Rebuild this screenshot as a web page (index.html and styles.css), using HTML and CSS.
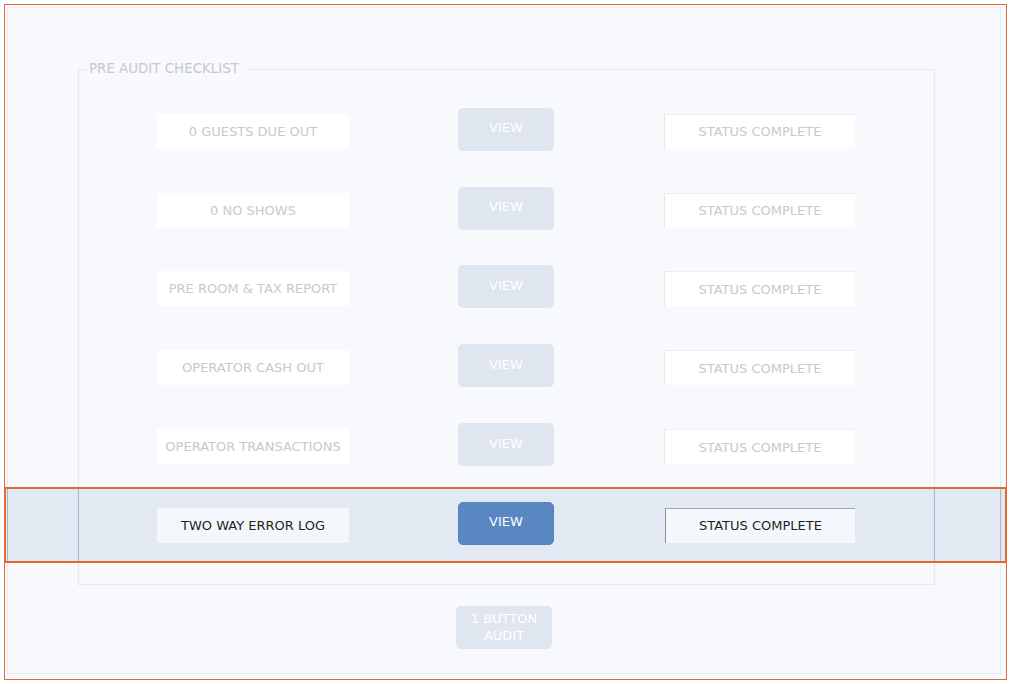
FILE: index.html
```html
<!DOCTYPE html>
<html>
<head>
<meta charset="utf-8">
<link rel="stylesheet" href="styles.css">
</head>
<body>
<div class="frame">
  <div class="panel">
    <fieldset class="checklist">
      <legend>PRE AUDIT CHECKLIST</legend>
      <div class="row">
        <div class="label">0 GUESTS DUE OUT</div>
        <button class="view">VIEW</button>
        <div class="status">STATUS COMPLETE</div>
      </div>
      <div class="row">
        <div class="label">0 NO SHOWS</div>
        <button class="view">VIEW</button>
        <div class="status">STATUS COMPLETE</div>
      </div>
      <div class="row">
        <div class="label">PRE ROOM &amp; TAX REPORT</div>
        <button class="view">VIEW</button>
        <div class="status">STATUS COMPLETE</div>
      </div>
      <div class="row">
        <div class="label">OPERATOR CASH OUT</div>
        <button class="view">VIEW</button>
        <div class="status">STATUS COMPLETE</div>
      </div>
      <div class="row">
        <div class="label">OPERATOR TRANSACTIONS</div>
        <button class="view">VIEW</button>
        <div class="status">STATUS COMPLETE</div>
      </div>
      <div class="row active">
        <div class="label">TWO WAY ERROR LOG</div>
        <button class="view">VIEW</button>
        <div class="status">STATUS COMPLETE</div>
      </div>
    </fieldset>
    <div class="footer">
      <button class="audit">1 BUTTON<br>AUDIT</button>
    </div>
  </div>
</div>
</body>
</html>
```

FILE: styles.css
```css
*, *::before, *::after { box-sizing: border-box; }

html, body {
  margin: 0;
  padding: 0;
  background: #ffffff;
  font-family: "DejaVu Sans", "Liberation Sans", sans-serif;
  font-size: 13px;
}

.frame {
  margin: 4px 0 0 4px;
  width: 1003px;
  height: 676px;
  border: 1px solid #e2692f;
  padding: 2px 5px 5px 2px;
  display: flex;
  flex-direction: column;
  background: #f8f9fc;
}

.panel {
  flex: 1;
  border: 1px solid #e7eaf0;
  background: #f8f9fc;
}

.checklist {
  margin: 53px 0 0 70px;
  width: 857px;
  border: 1px solid #e6e8ed;
  padding: 15px 0 19px 0;
  min-width: 0;
}

.checklist legend {
  margin-left: 7px;
  padding: 0 8px 0 3px;
  line-height: 16px;
  color: #c6c8cc;
  font-size: 13.4px;
}

.row {
  position: relative;
  height: 78.8px;
  display: grid;
  grid-template-columns: 192px 96px 192px;
  column-gap: 109px;
  align-items: center;
  padding-left: 78px;
}

.label {
  position: relative;
  z-index: 1;
  height: 35px;
  display: flex;
  align-items: center;
  justify-content: center;
  background: #ffffff;
  color: #c8c9cc;
  white-space: nowrap;
}

.view {
  position: relative;
  z-index: 1;
  height: 43px;
  margin-bottom: 4px;
  border: none;
  border-radius: 5px;
  background: #dfe6f0;
  color: #ffffff;
  font-family: inherit;
  font-size: 13px;
  padding: 0 0 3px 0;
}

.status {
  position: relative;
  z-index: 1;
  height: 35px;
  margin-left: 1px;
  display: flex;
  align-items: center;
  justify-content: center;
  background: #ffffff;
  border-top: 1px solid #eeeff1;
  border-left: 1px solid #e7e8ea;
  color: #c8c9cc;
  white-space: nowrap;
}

.row.active::before {
  content: "";
  position: absolute;
  z-index: 0;
  top: 1px;
  left: -75px;
  width: 1003px;
  height: 76px;
  border: 2px solid #e2692f;
  background:
    linear-gradient(#aab7c9, #aab7c9) 1px 0 / 1px 100% no-repeat,
    linear-gradient(#aab7c9, #aab7c9) 72px 0 / 1px 100% no-repeat,
    linear-gradient(#aab7c9, #aab7c9) 928px 0 / 1px 100% no-repeat,
    linear-gradient(#aab7c9, #aab7c9) 994px 0 / 1px 100% no-repeat,
    #e3e9f3;
}

.row.active .label {
  background: #f3f7fc;
  color: #1f1f22;
}

.row.active .view {
  background: #5887c1;
  border: 1px solid #5282bf;
  color: #ffffff;
}

.row.active .status {
  background: #f4f8fc;
  border-top: 1px solid #a3a5a8;
  border-left: 1px solid #8e9093;
  color: #1f1f22;
  margin-left: 2px;
}

.footer {
  margin: 21px 0 0 448px;
}

.audit {
  width: 96px;
  height: 43px;
  border: none;
  border-radius: 5px;
  background: #dfe6f0;
  color: #ffffff;
  font-family: inherit;
  font-size: 13px;
  line-height: 17px;
  padding: 0;
}
```
